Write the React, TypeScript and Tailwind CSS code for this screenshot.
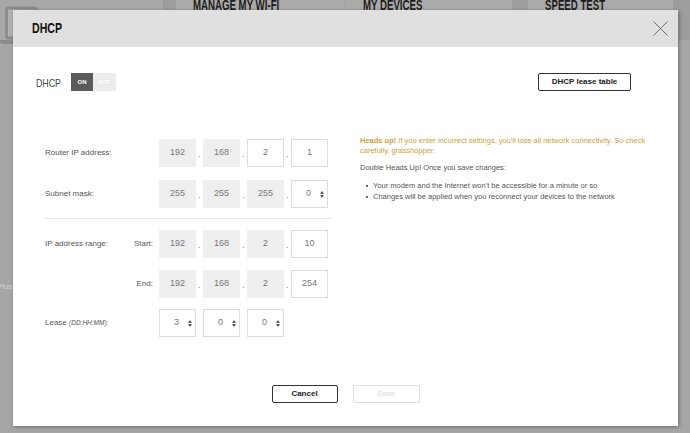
import React from "react";

type BoxProps = { v: string; gray?: boolean; spin?: boolean };

function Spinner() {
  return (
    <svg width="4" height="7" viewBox="0 0 4 7" className="shrink-0">
      <path d="M0 3 L2 0 L4 3 Z" fill="#555" />
      <path d="M0 4 L4 4 L2 7 Z" fill="#555" />
    </svg>
  );
}

function Box({ v, gray, spin }: BoxProps) {
  if (gray) {
    return (
      <div className="w-[37px] h-[28px] bg-[#efefef] flex items-center justify-center text-[9px] text-[#777]">
        {v}
      </div>
    );
  }
  if (spin) {
    return (
      <div className="w-[37px] h-[28px] border border-[#dcdcdc] bg-white flex items-center pl-[7px] text-[9px] text-[#777]">
        <span className="flex-1 text-center">{v}</span>
        <span className="ml-[2px] mr-[3px] flex">
          <Spinner />
        </span>
      </div>
    );
  }
  return (
    <div className="w-[37px] h-[28px] border border-[#dcdcdc] bg-white flex items-center justify-center text-[9px] text-[#777]">
      {v}
    </div>
  );
}

function Dot() {
  return <span className="w-[7px] text-center text-[9px] text-[#777] pt-[3px]">.</span>;
}

function Gap() {
  return <span className="w-[7px]" />;
}

function IpRow({ parts }: { parts: BoxProps[] }) {
  return (
    <div className="flex items-center">
      <Box {...parts[0]} />
      <Dot />
      <Box {...parts[1]} />
      <Dot />
      <Box {...parts[2]} />
      <Dot />
      <Box {...parts[3]} />
    </div>
  );
}

function NavItem({ label, width }: { label: string; width: string }) {
  return (
    <div className={`${width} bg-[#ababab] pl-[17px] whitespace-nowrap leading-[14px] text-[14px]`}>
      <div className="-mt-[2px] w-max font-bold text-[#1c1c1c] origin-left scale-x-[0.69]">
        {label}
      </div>
    </div>
  );
}

export default function App() {
  return (
    <div className="relative w-[690px] h-[433px] overflow-hidden bg-[#a6a6a6] font-['Liberation_Sans',Arial,sans-serif]">
      {/* page behind the dialog */}
      <div className="flex h-[40px] bg-[#9d9d9d]">
        <div className="w-[163px] bg-[#a8a8a8]">
          <svg width="40" height="46" viewBox="0 0 40 46">
            <rect x="6.5" y="8" width="30" height="30" rx="2" fill="#b2b2b2" stroke="#8c8c8c" strokeWidth="3" />
            <path d="M0 40 L40 40 L40 44 L3 44 Q0 44 0 41 Z" fill="#8c8c8c" />
          </svg>
        </div>
        <div className="w-[13px]" />
        <NavItem label="MANAGE MY WI-FI" width="w-[169px]" />
        <div className="w-px bg-[#a2a2a2]" />
        <NavItem label="MY DEVICES" width="w-[166px]" />
        <div className="w-[16px]" />
        <NavItem label="SPEED TEST" width="w-[145px]" />
      </div>
      <div className="pt-[241px] -ml-[3px] text-[8px] text-[#d2d2d2]">Plus</div>

      {/* dialog */}
      <div className="absolute left-[13px] top-[10px] w-[665px] h-[416px] bg-white flex flex-col shadow-[1px_1px_4px_rgba(0,0,0,0.35)]">
        <div className="h-[37px] shrink-0 bg-[#e0e0e0] flex items-center justify-between pl-[19px] pr-[10px]">
          <span className="inline-block origin-left scale-x-[0.705] text-[15px] font-bold text-[#111]">
            DHCP
          </span>
          <svg width="15" height="15" viewBox="0 0 15 15">
            <path d="M0.5 0.5 L14.5 14.5 M14.5 0.5 L0.5 14.5" stroke="#6e6e6e" strokeWidth="1" />
          </svg>
        </div>

        <div className="flex flex-col pl-[23px] pr-[28px]">
          <div className="mt-[26px] h-[18px] flex items-center justify-between">
            <div className="flex items-center">
              <div className="w-[25px] whitespace-nowrap">
                <span className="inline-block origin-left scale-x-[0.8] text-[11px] text-[#444]">DHCP</span>
              </div>
              <div className="ml-[10px] flex h-[18px]">
                <span className="w-[22px] bg-[#5a5a5a] text-white text-[6px] font-bold flex items-center justify-center">
                  ON
                </span>
                <span className="w-[23px] bg-[#ececec] text-white text-[6px] font-bold flex items-center justify-center">
                  OFF
                </span>
              </div>
            </div>
            <button className="mr-[19px] w-[93px] h-[18px] border-[1.5px] border-[#333] rounded-[2px] text-[8px] font-bold text-[#222] flex items-center justify-center">
              DHCP lease table
            </button>
          </div>

          <div className="mt-[48px] flex">
            {/* form */}
            <div className="ml-[9px] w-[286px] shrink-0 flex flex-col">
              <div className="flex items-center h-[28px]">
                <span className="w-[114px] text-[8px] text-[#555]">Router IP address:</span>
                <IpRow parts={[{ v: "192", gray: true }, { v: "168", gray: true }, { v: "2" }, { v: "1" }]} />
              </div>
              <div className="mt-[13px] flex items-center h-[28px]">
                <span className="w-[114px] text-[8px] text-[#555]">Subnet mask:</span>
                <IpRow parts={[{ v: "255", gray: true }, { v: "255", gray: true }, { v: "255", gray: true }, { v: "0", spin: true }]} />
              </div>
              <div className="mt-[10px] h-px bg-[#e6e6e6]" />
              <div className="mt-[11px] flex items-center h-[28px]">
                <span className="w-[114px] pr-[6px] flex justify-between text-[8px] text-[#555]">
                  <span>IP address range:</span>
                  <span>Start:</span>
                </span>
                <IpRow parts={[{ v: "192", gray: true }, { v: "168", gray: true }, { v: "2", gray: true }, { v: "10" }]} />
              </div>
              <div className="mt-[12px] flex items-center h-[28px]">
                <span className="w-[114px] pr-[6px] flex justify-end text-[8px] text-[#555]">
                  <span>End:</span>
                </span>
                <IpRow parts={[{ v: "192", gray: true }, { v: "168", gray: true }, { v: "2", gray: true }, { v: "254" }]} />
              </div>
              <div className="mt-[11px] flex items-center h-[28px]">
                <span className="w-[114px] text-[8px] text-[#555]">
                  Lease <i className="text-[6.5px]">(DD:HH:MM):</i>
                </span>
                <div className="flex items-center">
                  <Box v="3" spin />
                  <Gap />
                  <Box v="0" spin />
                  <Gap />
                  <Box v="0" spin />
                </div>
              </div>
            </div>

            {/* notes */}
            <div className="ml-[29px] flex-1 -mt-[3px] text-[7.5px] leading-[10px]">
              <p className="text-[#d19d3b]">
                <b>Heads up!</b> If you enter incorrect settings, you'll lose all network connectivity. So check carefully, grasshopper.
              </p>
              <p className="mt-[7px] text-[#555]">Double Heads Up! Once you save changes:</p>
              <ul className="mt-[8px] text-[#555] leading-[10.5px]">
                <li className="flex items-center">
                  <span className="w-[2px] h-[2px] bg-[#666] ml-[6px] mr-[5px]" />
                  Your modem and the Internet won't be accessible for a minute or so
                </li>
                <li className="flex items-center">
                  <span className="w-[2px] h-[2px] bg-[#666] ml-[6px] mr-[5px]" />
                  Changes will be applied when you reconnect your devices to the network
                </li>
              </ul>
            </div>
          </div>
        </div>

        <div className="mt-auto mb-[23px] flex justify-center gap-[15px]">
          <button className="w-[66px] h-[18px] border-[1.5px] border-[#333] rounded-[2px] text-[8px] font-bold text-[#222]">
            Cancel
          </button>
          <button className="w-[67px] h-[18px] border border-[#e0e0e0] rounded-[2px] text-[8px] text-[#d8d8d8]">
            Save
          </button>
        </div>
      </div>
    </div>
  );
}
